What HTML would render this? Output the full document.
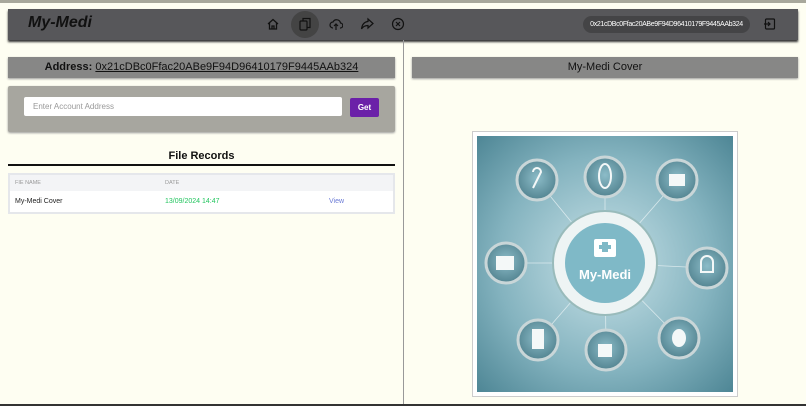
<!DOCTYPE html>
<html><head><meta charset="utf-8"><style>
*{margin:0;padding:0;box-sizing:border-box}
body{width:806px;height:406px;background:#fefef2;font-family:"Liberation Sans",sans-serif;position:relative;overflow:hidden}
.top{position:absolute;left:0;top:0;width:806px;height:3px;background:#a8a89c}
.nav{position:absolute;left:8px;top:9px;width:790px;height:31px;background:#57575a;box-shadow:0 2px 2px #333}
.logo{position:absolute;left:20px;top:5px;font-size:16px;font-weight:bold;font-style:italic;color:#111}
.ic{position:absolute;top:8px;width:14px;height:14px}
.addr{position:absolute;left:575px;top:7px;width:167px;height:17px;border-radius:9px;background:#444446;color:#fff;font-size:7px;line-height:17px;text-align:center;letter-spacing:-0.35px;white-space:nowrap;overflow:hidden}
.bar{position:absolute;top:57px;height:21px;background:#878786;color:#111;font-size:11px;font-weight:bold;text-align:center;line-height:21px;box-shadow:0 1px 2px #999}
.div{position:absolute;left:403px;top:40px;width:1px;height:366px;background:#999}
.card{position:absolute;left:8px;top:86px;width:387px;height:46px;background:#a7a69f;border-radius:2px;box-shadow:0 1px 2px #999}
.inp{position:absolute;left:16px;top:11px;width:318px;height:19px;background:#fff;border-radius:2px;font-size:8px;color:#999;padding-left:9px;line-height:19px}
.btn{position:absolute;left:342px;top:12px;width:29px;height:19px;background:#6b21a8;color:#fff;font-size:8px;font-weight:bold;text-align:center;line-height:19px;border-radius:2px}
.fr{position:absolute;left:8px;top:150px;width:387px;text-align:center;font-size:11px;color:#111;font-weight:bold;border-bottom:2px solid #111;padding-bottom:2px}
.tbl{position:absolute;left:8px;top:173px;width:387px;height:41px;border:2px solid #e5e7eb;background:#fff}
.th{height:16px;background:#f3f4f6;font-size:5.5px;color:#999;line-height:16px}
.td{height:21px;font-size:7px;line-height:21px;color:#222}
.img{position:absolute;left:472px;top:131px;width:266px;height:266px;border:1px solid #ccc;background:#fff;padding:4px}
.bl{position:absolute;left:0;bottom:0;width:806px;height:2px;background:#333}
</style></head><body>
<div class="top"></div>
<div class="nav">
<div class="logo">My-Medi</div>
<svg class="ic" style="left:258px" viewBox="0 0 14 14" fill="none" stroke="#111" stroke-width="1.3"><path d="M2 7L7 2.5 12 7M3.5 6v6h7V6M6 12V9h2v3"/></svg>
<div style="position:absolute;left:283px;top:2px;width:28px;height:27px;border-radius:50%;background:#444"></div>
<svg class="ic" style="left:290px" viewBox="0 0 14 14" fill="none" stroke="#111" stroke-width="1.2"><rect x="2" y="4" width="7" height="9" rx="1"/><path d="M5 4V1.5h7v9H9"/></svg>
<svg class="ic" style="left:321px" viewBox="0 0 14 14" fill="none" stroke="#111" stroke-width="1.2"><path d="M4 11a3 3 0 010-6 4 4 0 017.5 1 2.5 2.5 0 01-.5 5M7 13V7M5 9l2-2 2 2"/></svg>
<svg class="ic" style="left:352px" viewBox="0 0 14 14" fill="none" stroke="#111" stroke-width="1.2"><path d="M8 2l5 4.5L8 11V8.5C5 8.5 3 9.5 1.5 12 2 8 4 5 8 4.5z"/></svg>
<svg class="ic" style="left:383px" viewBox="0 0 14 14" fill="none" stroke="#111" stroke-width="1.2"><circle cx="7" cy="7" r="5.5"/><path d="M5 5l4 4M9 5l-4 4"/></svg>
<div class="addr">0x21cDBc0Ffac20ABe9F94D96410179F9445AAb324</div>
<svg class="ic" style="left:755px" viewBox="0 0 14 14" fill="none" stroke="#111" stroke-width="1.2"><rect x="2.5" y="2" width="9" height="10" rx="1"/><path d="M1 7h6M5 5l2 2-2 2"/></svg>
</div>
<div class="div"></div>
<div class="bar" style="left:8px;width:387px">Address: <span style="text-decoration:underline;font-weight:normal">0x21cDBc0Ffac20ABe9F94D96410179F9445AAb324</span></div>
<div class="bar" style="left:412px;width:386px;font-weight:normal">My-Medi Cover</div>
<div class="card"><div class="inp">Enter Account Address</div><div class="btn">Get</div></div>
<div class="fr">File Records</div>
<div class="tbl">
<div class="th"><span style="position:absolute;left:5px">FIE NAME</span><span style="position:absolute;left:155px">DATE</span></div>
<div class="td"><span style="position:absolute;left:5px">My-Medi Cover</span><span style="position:absolute;left:155px;color:#22c55e">13/09/2024 14:47</span><span style="position:absolute;left:319px;color:#6b7bd6">View</span></div>
</div>
<div class="img">
<svg width="256" height="256" viewBox="0 0 256 256" font-family="Liberation Sans">
<defs><radialGradient id="g" cx="50%" cy="50%" r="70%"><stop offset="0" stop-color="#c8e2e8"/><stop offset="0.6" stop-color="#84b3bf"/><stop offset="1" stop-color="#4f8796"/></radialGradient>
<radialGradient id="n" cx="50%" cy="45%" r="60%"><stop offset="0" stop-color="#8cbcc8"/><stop offset="1" stop-color="#4e7f8c"/></radialGradient></defs>
<rect width="256" height="256" fill="url(#g)"/>
<g stroke="#e8f2f4" stroke-width="0.8" opacity="0.8">
<line x1="128" y1="127" x2="60" y2="44"/><line x1="128" y1="127" x2="128" y2="41"/><line x1="128" y1="127" x2="200" y2="44"/><line x1="128" y1="127" x2="29" y2="127"/><line x1="128" y1="127" x2="230" y2="132"/><line x1="128" y1="127" x2="61" y2="204"/><line x1="128" y1="127" x2="129" y2="214"/><line x1="128" y1="127" x2="202" y2="202"/></g>
<circle cx="128" cy="127" r="52" fill="#eef4f4" stroke="#9bb" stroke-width="2"/>
<circle cx="128" cy="127" r="40" fill="#7fb9c7"/>
<rect x="117" y="103" width="22" height="18" rx="2" fill="#fff"/><path d="M125 106h6v3h3v4h-3v3h-6v-3h-3v-4h3z" fill="#7fb9c7"/>
<text x="128" y="143" font-size="13" font-weight="bold" fill="#fff" text-anchor="middle">My-Medi</text>
<g fill="url(#n)" stroke="#c9d6d8" stroke-width="3">
<circle cx="60" cy="44" r="20"/><circle cx="128" cy="41" r="20"/><circle cx="200" cy="44" r="20"/><circle cx="29" cy="127" r="20"/><circle cx="230" cy="132" r="20"/><circle cx="61" cy="204" r="20"/><circle cx="129" cy="214" r="20"/><circle cx="202" cy="202" r="20"/></g>
<g fill="#f4f8f8"><path d="M192 38h16v12h-16z"/><rect x="19" y="120" width="18" height="14"/><rect x="55" y="193" width="12" height="20"/><rect x="121" y="208" width="14" height="13"/><ellipse cx="202" cy="202" rx="7" ry="9"/></g>
<g fill="none" stroke="#f4f8f8" stroke-width="2"><ellipse cx="128" cy="40" rx="6" ry="12"/><path d="M56 36a4 4 0 018 0l-4 8-4 8"/><path d="M224 126a6 6 0 0112 0v10h-12z"/></g>
</svg></div>
<div class="bl"></div>
</body></html>
